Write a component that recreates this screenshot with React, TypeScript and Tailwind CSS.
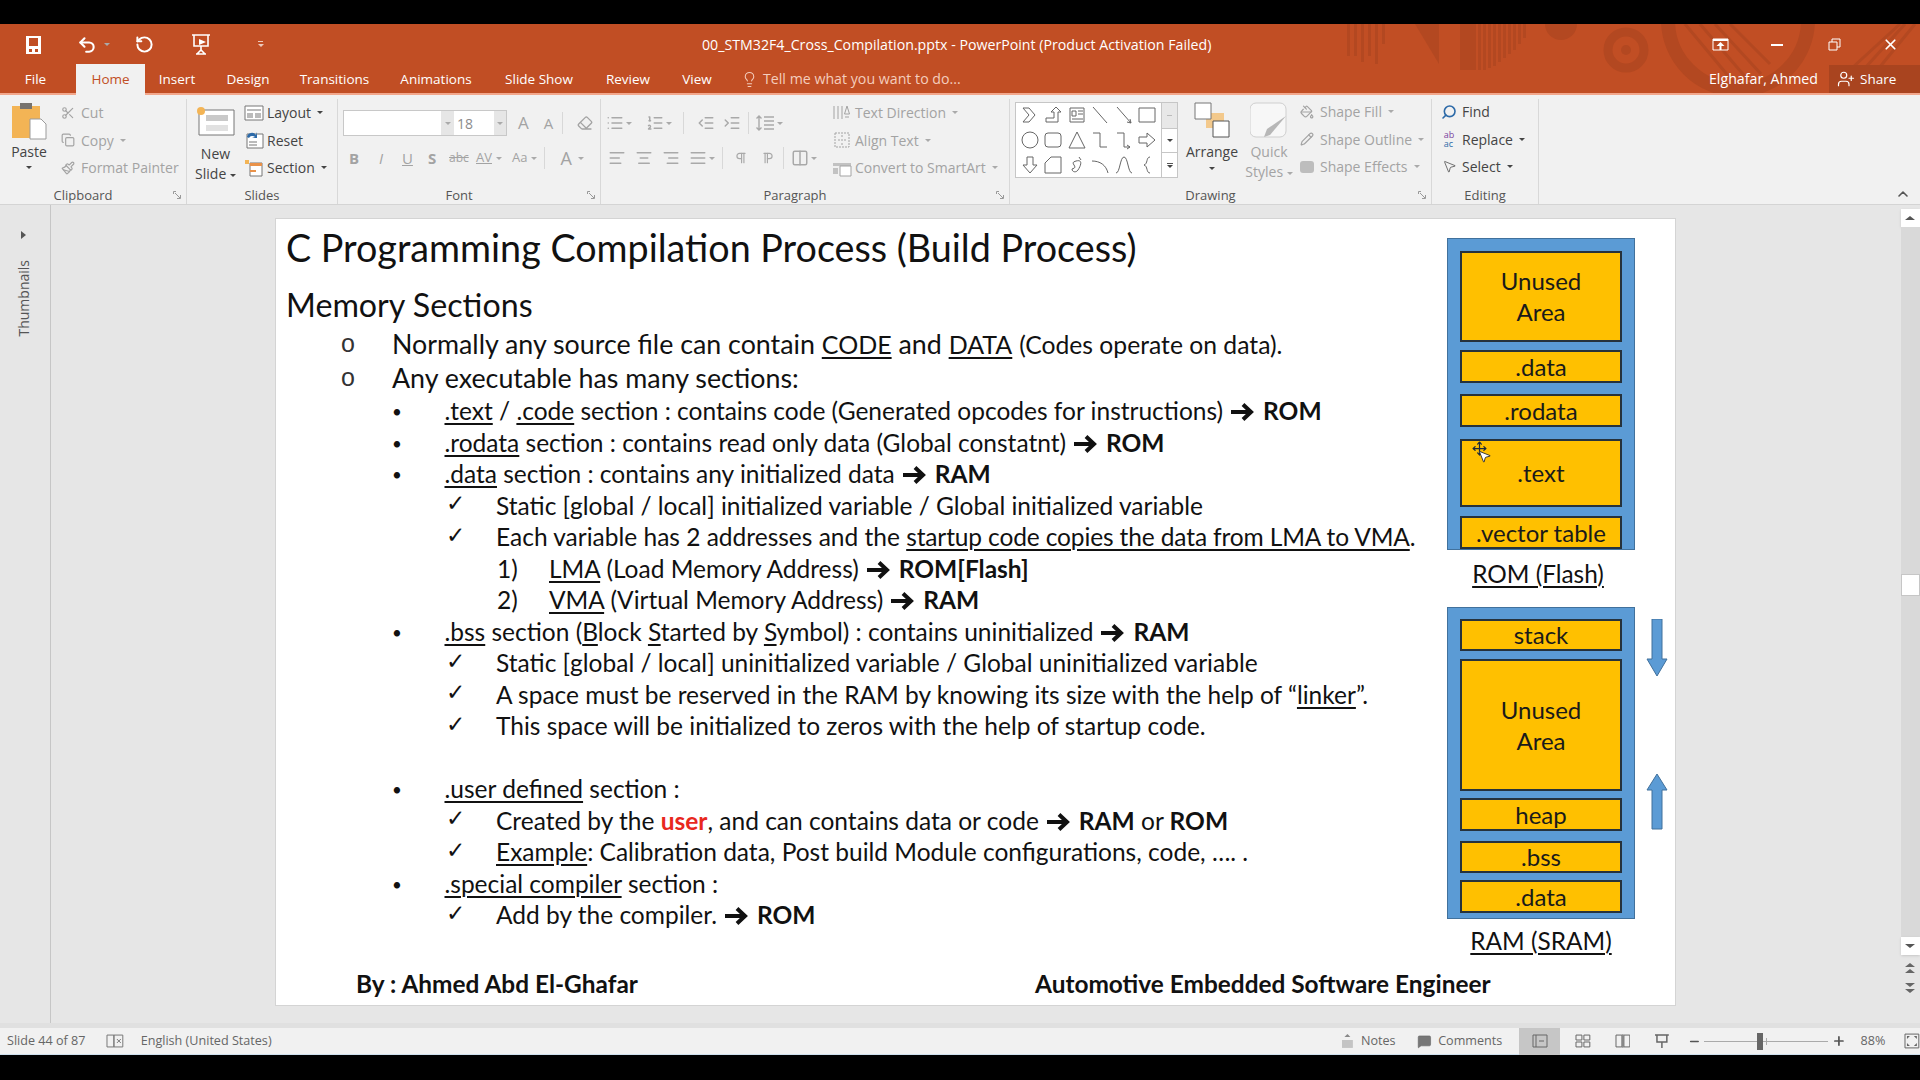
import React from "react";
import {
  Scissors,
  Copy,
  Paintbrush,
  Lightbulb,
  Minus,
  Plus,
  Search,
  MousePointer2,
  Undo2,
  RotateCw,
  X,
  UserPlus,
  AlignLeft,
  AlignCenter,
  AlignRight,
  AlignJustify,
  List,
  ListOrdered,
  IndentDecrease,
  IndentIncrease,
  Eraser,
  Pilcrow,
  Columns2,
  MessageSquare,
  Move,
  PaintBucket,
  Pencil,
  ChevronUp,
} from "lucide-react";

const Caret = ({ dark = false }: { dark?: boolean }) => (
  <span
    className={`inline-block border-x-[3px] border-t-[3px] border-x-transparent align-middle ${
      dark ? "border-t-[#444]" : "border-t-[#aaa]"
    }`}
  />
);

const Launcher = () => (
  <svg width="8" height="8" viewBox="0 0 8 8" className="text-[#999]">
    <path d="M0.5 3V0.5H3M2 2l5 5M7.5 4v3.5H4" fill="none" stroke="currentColor" />
  </svg>
);

interface GroupProps {
  width: string;
  label: string;
  launcher?: boolean;
  children: React.ReactNode;
}

const Group = ({ width, label, launcher, children }: GroupProps) => (
  <div className={`relative flex h-full flex-col border-r border-[#d8d8d8] ${width}`}>
    <div className="min-h-0 flex-1">{children}</div>
    <div
      className={`flex h-[18px] items-center justify-center pt-[1px] text-[13px] text-[#555] ${
        launcher ? "pr-[20px]" : ""
      }`}
    >
      {label}
    </div>
    {launcher && (
      <span className="absolute right-[5px] bottom-[5px] flex">
        <Launcher />
      </span>
    )}
  </div>
);

const SmallAction = ({
  icon,
  label,
  caret,
  active,
}: {
  icon: React.ReactNode;
  label: string;
  caret?: boolean;
  active?: boolean;
}) => (
  <div className={`flex h-[27.5px] items-center gap-[3px] whitespace-nowrap ${active ? "text-[#444]" : "text-[#a3a3a3]"}`}>
    <span className="flex w-[20px] justify-center">{icon}</span>
    <span>{label}</span>
    {caret && (
      <span className="ml-[3px] flex">
        <Caret dark={active} />
      </span>
    )}
  </div>
);

const galleryShapes = [
  "M3 3h6l6 7-6 7H3l6-7z",
  "M9 17H3v-4h8V7H8l5-5 5 5h-3v10z",
  "M3 3h14v14H3zM5 6h4v5H5zM11 6h5M11 9h5M5 14h11",
  "M3 2l14 16",
  "M3 2l14 16M17 18l-4-1M17 18l-1-4",
  "M2 3h16v14H2z",
  "M10 10m-8 0a8 8 0 1 0 16 0a8 8 0 1 0-16 0",
  "M5 3h10a3 3 0 0 1 3 3v8a3 3 0 0 1-3 3H5a3 3 0 0 1-3-3V6a3 3 0 0 1 3-3z",
  "M10 2l8 16H2z",
  "M3 3h7v14h7",
  "M3 3h7v14h6M16 17l-3-2M16 17l-3 2",
  "M2 7h8V3l8 7-8 7v-4H2z",
  "M7 2h6v8h4l-7 8-7-8h4z",
  "M2 18V8l6-6h10v16z",
  "M5 14c8-2-4-6 4-8s4 6 2 9-6 2-6-1M12 2l2 3",
  "M2 6c8 0 14 4 16 12",
  "M2 18c4 0 4-16 8-16s4 16 8 16",
  "M13 2c-4 0-2 7-6 8 4 1 2 8 6 8",
];

const MemBox = ({ h, mt, label, big }: { h: string; mt: string; label: string; big?: boolean }) => (
  <div
    className={`flex w-[162px] items-center justify-center border-2 border-[#26323c] bg-[#ffc000] pb-[1px] text-center text-[24px] leading-[31px] text-[#1a1a1a] ${h} ${mt}`}
  >
    {big ? (
      <span>
        Unused
        <br />
        Area
      </span>
    ) : (
      label
    )}
  </div>
);

const To = () => (
  <svg width="24" height="20" viewBox="0 0 24 20" className="mr-[9px] ml-[7px] inline-block align-[-2px] text-[#111]">
    <path d="M1 10h19M13 2.500l8 7.500-8 7.500" fill="none" stroke="currentColor" strokeWidth="4" />
  </svg>
);

const U = ({ children }: { children: React.ReactNode }) => (
  <span className="underline decoration-[1.5px] underline-offset-[3px]">{children}</span>
);

const levelPad = {
  2: "pl-[116px]",
  3: "pl-[170px]",
  4: "pl-[221px]",
};

const levelMark = {
  2: "w-[52.5px] text-[17px]",
  3: "w-[50px] -translate-y-[3px] font-['DejaVu_Sans',sans-serif] text-[23px] font-bold",
  4: "w-[52px]",
};

const Line = ({ level, mark, children }: { level: 2 | 3 | 4; mark?: string; children?: React.ReactNode }) => (
  <div className={`flex h-[31.5px] items-center whitespace-nowrap text-[24.5px] ${levelPad[level]}`}>
    <span className={`shrink-0 ${levelMark[level]}`}>{mark ?? (level === 2 ? "•" : level === 3 ? "✓" : "")}</span>
    <span>{children}</span>
  </div>
);

const Top = ({ children }: { children: React.ReactNode }) => (
  <div className="flex h-[34px] items-center whitespace-nowrap pl-[65px] text-[26.8px]">
    <span className="w-[51px] shrink-0 font-['Liberation_Sans',sans-serif] text-[25px] text-[#333]">o</span>
    <span>{children}</span>
  </div>
);

export default function App() {
  return (
    <div className="flex h-[1080px] w-[1920px] flex-col overflow-hidden bg-black font-['Open_Sans',sans-serif] text-[13.5px]">
      <div className="h-[24px] shrink-0" />

      {/* title bar and tabs */}
      <div className="relative h-[71px] shrink-0 border-b-2 border-[#f2a78c] bg-[#c14e24] text-white">
        <svg className="absolute top-0 left-[1300px]" width="620" height="69" viewBox="0 0 620 69">
          <g fill="#b34821">
            <path d="M47 0h3v32h-3zM54 0h3v32h-3zM61 0h3v38h-3zM68 0h3v32h-3zM75 0h3v40h-3zM82 0h3v20h-3z" />
            <path d="M115 0h24v40z" />
            <path d="M160 0h16v46h-16zM178 0h3v46h-3zM183 0h3v46h-3zM188 0h3v44h-3zM193 0h3v42h-3zM198 0h3v38h-3zM203 0h3v34h-3zM208 0h3v30h-3zM213 0h3v26h-3zM218 0h3v20h-3zM223 0h3v14h-3z" />
            <path d="M245 0h32a16 16 0 0 1-32 0z" />
          </g>
          <circle cx="326" cy="26" r="18" fill="none" stroke="#b34821" strokeWidth="9" />
          <circle cx="326" cy="26" r="5" fill="#b34821" />
          <circle cx="438" cy="-4" r="70" fill="none" stroke="#b34821" strokeWidth="14" />
          <path d="M385 0l50 60M400 0l48 56M415 0l46 50M430 0l40 40" stroke="#b34821" strokeWidth="3" />
          <path d="M540 55l60-55M555 55l50-55M570 55l45-55" stroke="#b34821" strokeWidth="3" />
        </svg>

        <div className="relative flex h-[41px] items-center">
          <div className="flex h-full w-[702px] shrink-0 items-center">
            <svg width="17" height="20" viewBox="0 0 17 20" className="ml-[25px]">
              <path d="M1 1h15v18H1z" fill="#fff" />
              <path d="M4 3h9v8H4z" fill="#c14e24" />
              <path d="M4 14h3v3H4zM10 14h3v3h-3z" fill="#c14e24" />
            </svg>
            <Undo2 size={20} strokeWidth={2.5} className="ml-[35px]" />
            <span className="ml-[7px] flex">
              <Caret dark={false} />
            </span>
            <RotateCw size={19} strokeWidth={2.5} className="ml-[25px] -scale-x-100" />
            <svg width="22" height="24" viewBox="0 0 22 24" className="ml-[36px]">
              <path d="M2 2h18M4 2v11h14V2M11 13v4M7 21l4-4 4 4M6 21h10" fill="none" stroke="#fff" strokeWidth="1.6" />
              <path d="M9 6l7 3-7 3z" fill="#fff" />
            </svg>
            <span className="ml-[46px] flex h-[7px] w-[5px] flex-col items-center">
              <span className="h-[1px] w-[5px] bg-white/70" />
              <span className="mt-[2px] border-x-[3px] border-t-[3px] border-x-transparent border-t-white/70" />
            </span>
          </div>
          <div className="w-[509px] shrink-0 whitespace-nowrap text-center text-[14.2px]">
            00_STM32F4_Cross_Compilation.pptx - PowerPoint (Product Activation Failed)
          </div>
          <svg width="17" height="13" viewBox="0 0 17 13" className="ml-[501px]">
            <path d="M1 1h15v11H1z" fill="none" stroke="#fff" />
            <path d="M1 1h15v2H1zM8.5 4l4 4h-3v4h-2V8h-3z" fill="#fff" />
          </svg>
          <span className="ml-[42px] h-[2px] w-[12px] bg-white" />
          <svg width="13" height="13" viewBox="0 0 13 13" className="ml-[45px]">
            <path d="M1 4h8v8H1zM4 4V1h8v8H9" fill="none" stroke="#fff" />
          </svg>
          <X size={17} strokeWidth={2.4} className="ml-[41px]" />
        </div>

        <div className="relative flex h-[28px] items-end">
          <div className="flex h-full w-[76px] items-center justify-center pr-[5px]">File</div>
          <div className="-mb-[2px] flex h-[31px] w-[69px] items-center justify-center bg-[#f1f1f1] text-[#c14e24]">Home</div>
          <div className="flex h-full w-[64px] items-center justify-center">Insert</div>
          <div className="flex h-full w-[78px] items-center justify-center">Design</div>
          <div className="flex h-full w-[95px] items-center justify-center">Transitions</div>
          <div className="flex h-full w-[108px] items-center justify-center">Animations</div>
          <div className="flex h-full w-[98px] items-center justify-center">Slide Show</div>
          <div className="flex h-full w-[80px] items-center justify-center">Review</div>
          <div className="flex h-full w-[58px] items-center justify-center">View</div>
          <div className="flex h-full items-center pl-[15px] text-[14.2px] text-[#f4cdbd]">
            <Lightbulb size={17} strokeWidth={1.5} />
            <span className="ml-[5px]">Tell me what you want to do...</span>
          </div>
          <div className="ml-auto flex h-full items-center">
            <span className="mr-[11px] whitespace-nowrap text-[14.2px]">Elghafar, Ahmed</span>
            <div className="flex h-full w-[91px] items-center bg-[#a9441f] pl-[8px]">
              <UserPlus size={18} strokeWidth={1.6} />
              <span className="ml-[5px]">Share</span>
            </div>
          </div>
        </div>
      </div>

      {/* ribbon */}
      <div className="relative flex h-[110px] shrink-0 border-b border-[#d4d4d4] bg-[#f1f1f1] pt-[4px] text-[14px] text-[#444]">
        <Group width="w-[187px]" label="Clipboard" launcher>
          <div className="flex h-full">
            <div className="flex w-[58px] flex-col items-center pt-[3px]">
              <svg width="36" height="38" viewBox="0 0 36 38">
                <path d="M1 4h28v32H1z" fill="#f3b455" />
                <path d="M9 1h12v6H9z" fill="#77736e" />
                <path d="M19 17h11l5 5v15H19z" fill="#fff" stroke="#9b9b9b" />
              </svg>
              <span className="mt-[3px] leading-[18px]">Paste</span>
              <span className="mt-[5px] flex">
                <Caret dark />
              </span>
            </div>
            <div>
              <SmallAction icon={<Scissors size={14} />} label="Cut" />
              <SmallAction icon={<Copy size={14} />} label="Copy" caret />
              <SmallAction icon={<Paintbrush size={14} />} label="Format Painter" />
            </div>
          </div>
        </Group>

        <Group width="w-[151px]" label="Slides">
          <div className="flex h-full">
            <div className="flex w-[57px] flex-col items-center pt-[7px]">
              <svg width="40" height="30" viewBox="0 0 40 30">
                <path d="M3 4h35v25H3z" fill="#fff" stroke="#777" />
                <path d="M10 9h22v6H10z" fill="#c9c9c9" />
                <path d="M10 19h22v6H10z" fill="#e1e1e1" />
                <circle cx="5" cy="5" r="4" fill="#f3b455" />
              </svg>
              <span className="mt-[9px] leading-[18px]">New</span>
              <span className="mt-[2px] whitespace-nowrap leading-[18px]">
                Slide <Caret dark />
              </span>
            </div>
            <div>
              <SmallAction
                active
                caret
                label="Layout"
                icon={
                  <svg width="20" height="16" viewBox="0 0 20 16">
                    <path d="M1 1h18v14H1z" fill="#fff" stroke="#777" />
                    <path d="M3 4h14v2H3zM3 8h6v5H3zM11 8h6v5h-6z" fill="#bbb" />
                  </svg>
                }
              />
              <SmallAction
                active
                label="Reset"
                icon={
                  <svg width="20" height="18" viewBox="0 0 20 18">
                    <path d="M3 3h16v14H3z" fill="#fff" stroke="#777" />
                    <path d="M5 10h8v2H5zM5 13h8v2H5z" fill="#bbb" />
                    <path d="M3 6a5 5 0 0 1 9-2l1-3v6H8l3-1a4 4 0 0 0-6 1z" fill="#2d6aa8" />
                  </svg>
                }
              />
              <SmallAction
                active
                caret
                label="Section"
                icon={
                  <svg width="20" height="18" viewBox="0 0 20 18">
                    <path d="M1 1h4v4H1z" fill="#f3b455" />
                    <path d="M6 4h12v13H6z" fill="#fff" stroke="#777" />
                    <path d="M6 4h12v3H6zM6 11h6v2H6z" fill="#e9924a" />
                  </svg>
                }
              />
            </div>
          </div>
        </Group>

        <Group width="w-[263px]" label="Font" launcher>
          <div className="flex h-full flex-col pl-[5px] pt-[11px] text-[#a3a3a3]">
            <div className="flex h-[26px] items-center">
              <div className="h-[26px] w-[98px] border border-r-0 border-[#c8c8c8] bg-white" />
              <div className="flex h-[26px] w-[13px] items-center justify-center border-y border-[#c8c8c8] bg-[#e6e6e6]">
                <Caret />
              </div>
              <div className="flex h-[26px] w-[40px] items-center border-y border-[#c8c8c8] bg-white pl-[3px] text-[#8b8b8b]">
                18
              </div>
              <div className="flex h-[26px] w-[13px] items-center justify-center border border-l-0 border-[#c8c8c8] bg-[#e6e6e6]">
                <Caret />
              </div>
              <span className="ml-[11px] text-[17px]">A</span>
              <span className="ml-[15px] text-[15px]">A</span>
              <span className="ml-[9px] h-[22px] w-px bg-[#d8d8d8]" />
              <Eraser size={16} className="ml-[14px]" />
            </div>
            <div className="mt-[10px] flex h-[24px] items-center text-[15px]">
              <span className="ml-[6px] w-[20px] font-bold">B</span>
              <span className="ml-[10px] w-[18px] italic">I</span>
              <span className="ml-[5px] w-[20px] underline">U</span>
              <span className="ml-[6px] w-[20px] font-bold">S</span>
              <span className="ml-[1px] w-[23px] text-[12px] line-through">abc</span>
              <span className="ml-[4px] text-[13px] underline">AV</span>
              <span className="ml-[4px] flex">
                <Caret />
              </span>
              <span className="ml-[10px] text-[13px]">Aa</span>
              <span className="ml-[4px] flex">
                <Caret />
              </span>
              <span className="ml-[7px] h-[22px] w-px bg-[#d8d8d8]" />
              <span className="ml-[15px] text-[18px]">A</span>
              <span className="ml-[6px] flex">
                <Caret />
              </span>
            </div>
          </div>
        </Group>

        <Group width="w-[409px]" label="Paragraph" launcher>
          <div className="flex h-full text-[#a9a9a9]">
            <div className="w-[231px] pl-[7px] pt-[11px]">
              <div className="flex h-[26px] items-center">
                <List size={18} className="-ml-[2px]" />
                <span className="ml-[2px] flex">
                  <Caret />
                </span>
                <ListOrdered size={18} className="ml-[14px]" />
                <span className="ml-[2px] flex">
                  <Caret />
                </span>
                <span className="ml-[11px] h-[22px] w-px bg-[#d8d8d8]" />
                <IndentDecrease size={18} className="ml-[13px]" />
                <IndentIncrease size={18} className="ml-[8px]" />
                <span className="ml-[7px] h-[22px] w-px bg-[#d8d8d8]" />
                <svg width="20" height="18" viewBox="0 0 20 18" className="ml-[6px]">
                  <path d="M4 2v14M1.5 4.5L4 2l2.5 2.5M1.5 13.500L4 16l2.500-2.500M9 3h10M9 7h10M9 11h10M9 15h10" fill="none" stroke="currentColor" strokeWidth="1.4" />
                </svg>
                <span className="ml-[2px] flex">
                  <Caret />
                </span>
              </div>
              <div className="mt-[10px] flex h-[24px] items-center">
                <AlignLeft size={18} />
                <AlignCenter size={18} className="ml-[9px]" />
                <AlignRight size={18} className="ml-[9px]" />
                <AlignJustify size={18} className="ml-[9px]" />
                <span className="ml-[2px] flex">
                  <Caret />
                </span>
                <span className="ml-[7px] h-[22px] w-px bg-[#d8d8d8]" />
                <Pilcrow size={14} className="ml-[11px]" />
                <Pilcrow size={14} className="ml-[13px] -scale-x-100" />
                <span className="ml-[8px] h-[22px] w-px bg-[#d8d8d8]" />
                <Columns2 size={18} className="ml-[7px]" />
                <span className="ml-[2px] flex">
                  <Caret />
                </span>
              </div>
            </div>
            <div>
              <SmallAction
                caret
                label="Text Direction"
                icon={
                  <svg width="20" height="20" viewBox="0 0 20 20">
                    <path d="M2 3v13M6 3v13M10 3v13M15 3l-2.500 8h5zM13 14h4" fill="none" stroke="currentColor" />
                  </svg>
                }
              />
              <SmallAction
                caret
                label="Align Text"
                icon={
                  <svg width="20" height="20" viewBox="0 0 20 20">
                    <path d="M3 3h14v14H3zM6 10h8M10 5v3M10 15v-3" fill="none" stroke="currentColor" strokeDasharray="2 1" />
                  </svg>
                }
              />
              <SmallAction
                caret
                label="Convert to SmartArt"
                icon={
                  <svg width="20" height="18" viewBox="0 0 20 18">
                    <path d="M1 4h18v3H1z" fill="#c2c2c2" />
                    <path d="M8 7h11v10H8z" fill="#fff" stroke="currentColor" />
                    <path d="M1 9h5v6H1z" fill="#c2c2c2" />
                  </svg>
                }
              />
            </div>
          </div>
        </Group>

        <Group width="w-[422px]" label="Drawing" launcher>
          <div className="flex h-full pl-[5px] pt-[3px]">
            <div className="flex h-[76px] w-[163px] border border-[#c6c6c6] bg-white">
              <div className="grid flex-1 grid-cols-6 grid-rows-3 place-items-center px-[2px] text-[#666]">
                {galleryShapes.map((d) => (
                  <svg key={d} width="20" height="20" viewBox="0 0 20 20">
                    <path d={d} fill="none" stroke="currentColor" />
                  </svg>
                ))}
              </div>
              <div className="flex w-[16px] flex-col border-l border-[#c6c6c6]">
                <div className="flex h-[25px] items-center justify-center bg-[#e8e8e8]">
                  <span className="h-[1px] w-[5px] bg-[#bbb]" />
                </div>
                <div className="flex h-[25px] items-center justify-center border-y border-[#c6c6c6]">
                  <Caret dark />
                </div>
                <div className="flex h-[24px] flex-col items-center justify-center gap-[1px]">
                  <span className="h-[1px] w-[6px] bg-[#555]" />
                  <Caret dark />
                </div>
              </div>
            </div>
            <div className="flex w-[68px] flex-col items-center">
              <svg width="36" height="36" viewBox="0 0 36 36">
                <path d="M12 11h18v15H12z" fill="#f3c98c" />
                <path d="M1 1h16v16H1z" fill="#fff" stroke="#777" />
                <path d="M19 19h16v16H19z" fill="#fff" stroke="#555" />
              </svg>
              <span className="mt-[5px] leading-[18px]">Arrange</span>
              <span className="mt-[6px] flex">
                <Caret dark />
              </span>
            </div>
            <div className="flex w-[46px] flex-col items-center text-[#a3a3a3]">
              <svg width="38" height="36" viewBox="0 0 38 36">
                <path d="M6 1h24a6 6 0 0 1 6 6v22a6 6 0 0 1-6 6H6a6 6 0 0 1-6-6V7a6 6 0 0 1 6-6z" fill="#f7f7f7" stroke="#cfcfcf" />
                <path d="M36 14L20 33l-6 2 3-8z" fill="#b7b7b7" />
              </svg>
              <span className="mt-[5px] leading-[18px]">Quick</span>
              <span className="mt-[2px] whitespace-nowrap leading-[18px]">
                Styles <Caret />
              </span>
            </div>
            <div className="ml-[5px] -mt-[4px]">
              <SmallAction icon={<PaintBucket size={14} />} label="Shape Fill" caret />
              <SmallAction icon={<Pencil size={14} />} label="Shape Outline" caret />
              <SmallAction icon={<span className="h-[12px] w-[14px] rounded-[3px] bg-[#bdbdbd]" />} label="Shape Effects" caret />
            </div>
          </div>
        </Group>

        <Group width="w-[107px]" label="Editing">
          <div className="-mt-[1px] pl-[7px]">
            <SmallAction active icon={<Search size={16} strokeWidth={2.4} className="-scale-x-100 text-[#2d6aa8]" />} label="Find" />
            <SmallAction
              active
              caret
              label="Replace"
              icon={
                <span className="text-[9px] leading-[9px]">
                  <span className="text-[#7b3fa0]">ab</span>
                  <br />
                  <span className="text-[#2d6aa8]">ac</span>
                </span>
              }
            />
            <SmallAction active caret label="Select" icon={<MousePointer2 size={15} strokeWidth={1.2} />} />
          </div>
        </Group>

        <ChevronUp size={16} strokeWidth={2.4} className="absolute right-[9px] bottom-[2px] text-[#555]" />
      </div>

      {/* workspace */}
      <div className="flex min-h-0 flex-1 border-b-[5px] border-[#e0e0e0] bg-[#e6e6e6]">
        <div className="flex w-[51px] shrink-0 flex-col items-center border-r border-[#c6c6c6] pt-[26px] pr-[4px]">
          <span className="border-y-[4px] border-l-[5px] border-y-transparent border-l-[#555]" />
          <span className="mt-[21px] rotate-180 text-[14px] text-[#555] [writing-mode:vertical-rl]">Thumbnails</span>
        </div>

        <div className="min-w-0 flex-1 pl-[224px] pt-[13px]">
          {/* slide */}
          <div className="flex h-[788px] w-[1401px] flex-col border border-[#d4d4d4] bg-white font-['Lato',sans-serif] text-[#111]">
            <div className="flex h-[745px] shrink-0">
              <div className="w-[1171px] shrink-0">
                <div className="flex h-[58px] items-center whitespace-nowrap pl-[10px] text-[37.7px]">
                  C Programming Compilation Process (Build Process)
                </div>
                <div className="flex h-[50px] items-center whitespace-nowrap pl-[10px] pt-[6px] text-[32.2px]">
                  Memory Sections
                </div>
                <Top>
                  Normally any source file can contain{" "}
                  <span className="text-[25px]">
                    <U>CODE</U>
                  </span>{" "}
                  and{" "}
                  <span className="text-[25px]">
                    <U>DATA</U>
                  </span>{" "}
                  <span className="text-[24.7px]">(Codes operate on data).</span>
                </Top>
                <Top>Any executable has many sections:</Top>
                <div className="mt-[1px]">
                  <Line level={2}>
                    <U>.text</U> / <U>.code</U> section : contains code (Generated opcodes for instructions)
                    <To />
                    <b>ROM</b>
                  </Line>
                  <Line level={2}>
                    <U>.rodata</U> section : contains read only data (Global constatnt)
                    <To />
                    <b>ROM</b>
                  </Line>
                  <Line level={2}>
                    <U>.data</U> section : contains any initialized data
                    <To />
                    <b>RAM</b>
                  </Line>
                  <Line level={3}>Static [global / local] initialized variable / Global initialized variable</Line>
                  <Line level={3}>
                    Each variable has 2 addresses and the{" "}
                    <span className="tracking-[-0.13px]">
                      <U>startup code copies the data from LMA to VMA</U>
                    </span>
                    .
                  </Line>
                  <Line level={4} mark="1)">
                    <U>LMA</U> (Load Memory Address)
                    <To />
                    <b>ROM[Flash]</b>
                  </Line>
                  <Line level={4} mark="2)">
                    <U>VMA</U> (Virtual Memory Address)
                    <To />
                    <b>RAM</b>
                  </Line>
                  <Line level={2}>
                    <U>.bss</U> section (<U>B</U>lock <U>S</U>tarted by <U>S</U>ymbol) : contains uninitialized
                    <To />
                    <b>RAM</b>
                  </Line>
                  <Line level={3}>Static [global / local] uninitialized variable / Global uninitialized variable</Line>
                  <Line level={3}>
                    A space must be reserved in the RAM by knowing its size with the help of “<U>linker</U>”.
                  </Line>
                  <Line level={3}>This space will be initialized to zeros with the help of startup code.</Line>
                  <div className="h-[31.5px]" />
                  <Line level={2}>
                    <U>.user defined</U> section :
                  </Line>
                  <Line level={3}>
                    Created by the <b className="text-[#e8281e]">user</b>, and can contains data or code
                    <To />
                    <b>RAM</b> or <b>ROM</b>
                  </Line>
                  <Line level={3}>
                    <U>Example</U>: Calibration data, Post build Module configurations, code, …. .
                  </Line>
                  <Line level={2}>
                    <U>.special compiler</U> section :
                  </Line>
                  <Line level={3}>
                    Add by the compiler.
                    <To />
                    <b>ROM</b>
                  </Line>
                </div>
              </div>

              <div className="relative flex-1 pt-[19px]">
                <div className="flex h-[312px] w-[188px] flex-col border border-[#41719c] bg-[#5b9bd5] pl-[12px]">
                  <MemBox h="h-[91px]" mt="mt-[12px]" label="" big />
                  <MemBox h="h-[33px]" mt="mt-[8px]" label=".data" />
                  <MemBox h="h-[33px]" mt="mt-[11px]" label=".rodata" />
                  <MemBox h="h-[68px]" mt="mt-[12px]" label=".text" />
                  <MemBox h="h-[33px]" mt="mt-[9px]" label=".vector table" />
                </div>
                <div className="flex h-[48px] w-[182px] items-center justify-center text-[24.4px] underline decoration-[1.5px] underline-offset-[3px]">
                  ROM (Flash)
                </div>
                <div className="mt-[9px] flex">
                  <div className="flex h-[312px] w-[188px] shrink-0 flex-col border border-[#41719c] bg-[#5b9bd5] pl-[12px]">
                    <MemBox h="h-[32px]" mt="mt-[11px]" label="stack" />
                    <MemBox h="h-[132px]" mt="mt-[8px]" label="" big />
                    <MemBox h="h-[33px]" mt="mt-[7px]" label="heap" />
                    <MemBox h="h-[32px]" mt="mt-[10px]" label=".bss" />
                    <MemBox h="h-[33px]" mt="mt-[7px]" label=".data" />
                  </div>
                  <div className="ml-[11px] flex flex-col pt-[12px]">
                    <svg width="22" height="58" viewBox="0 0 22 58">
                      <path d="M6 0h10v40h5L11 57 1 40h5z" fill="#5b9bd5" stroke="#41719c" />
                    </svg>
                    <svg width="22" height="57" viewBox="0 0 22 57" className="mt-[96px]">
                      <path d="M6 56h10V17h5L11 1 1 17h5z" fill="#5b9bd5" stroke="#41719c" />
                    </svg>
                  </div>
                </div>
                <div className="flex h-[44px] w-[188px] items-center justify-center text-[24.4px] underline decoration-[1.5px] underline-offset-[3px]">
                  RAM (SRAM)
                </div>
                <div className="absolute top-[222px] left-[25px] text-[#222]">
                  <Move size={15} strokeWidth={2} className="text-[#1c2a3a]" />
                  <MousePointer2 size={15} fill="#fff" strokeWidth={1.4} className="-mt-[7px] ml-[5px]" />
                </div>
              </div>
            </div>
            <div className="flex h-[41px] items-center whitespace-nowrap pl-[80px] text-[24.4px] font-bold">
              <span className="w-[679px] shrink-0">By : Ahmed Abd El-Ghafar</span>
              <span>Automotive Embedded Software Engineer</span>
            </div>
          </div>
        </div>

        {/* scrollbar */}
        <div className="relative flex w-[20px] shrink-0 flex-col items-center pt-[4px]">
          <div className="flex h-[18px] w-[19px] items-center justify-center bg-white shadow-sm">
            <span className="border-x-[5px] border-b-[4px] border-x-transparent border-b-[#555]" />
          </div>
          <div className="flex h-[710px] w-[19px] flex-col bg-[#d9d9d9] pt-[347px]">
            <div className="h-[22px] w-[19px] border border-[#c6c6c6] bg-white" />
          </div>
          <div className="flex h-[18px] w-[19px] items-center justify-center bg-white shadow-sm">
            <span className="border-x-[5px] border-t-[4px] border-x-transparent border-t-[#555]" />
          </div>
          <div className="mt-[8px] flex flex-col items-center gap-[2px]">
            <span className="border-x-[5px] border-b-[4px] border-x-transparent border-b-[#666]" />
            <span className="border-x-[5px] border-b-[4px] border-x-transparent border-b-[#666]" />
          </div>
          <div className="mt-[10px] flex flex-col items-center gap-[2px]">
            <span className="border-x-[5px] border-t-[4px] border-x-transparent border-t-[#666]" />
            <span className="border-x-[5px] border-t-[4px] border-x-transparent border-t-[#666]" />
          </div>
        </div>
      </div>

      {/* status bar */}
      <div className="flex h-[27px] shrink-0 items-center border-b border-[#cfe0ee] bg-[#f1f1f1] text-[12.6px] text-[#666]">
        <span className="ml-[7px] w-[100px] whitespace-nowrap">Slide 44 of 87</span>
        <svg width="18" height="15" viewBox="0 0 18 15">
          <path d="M1 1h7v12H1zM8 1h9v12H8z" fill="none" stroke="#777" />
          <path d="M11 5l4 4M15 5l-4 4" stroke="#777" />
        </svg>
        <span className="ml-[17px] w-[136px] whitespace-nowrap">English (United States)</span>
        <svg width="13" height="14" viewBox="0 0 13 14" className="ml-[1066px]">
          <path d="M1 6h11v8H1z" fill="#c4c4c4" />
          <path d="M6.5 0l3 3h-6z" fill="#888" />
        </svg>
        <span className="ml-[7px] w-[57px]">Notes</span>
        <MessageSquare size={15} fill="#777" strokeWidth={1} className="mr-[6px]" />
        <span className="w-[82px]">Comments</span>
        <div className="flex h-[27px] w-[41px] items-center justify-center bg-[#c6c6c6]">
          <svg width="16" height="14" viewBox="0 0 16 14">
            <path d="M1 1h14v12H1zM4 1v12M7 7h5" fill="none" stroke="#666" />
          </svg>
        </div>
        <svg width="16" height="14" viewBox="0 0 16 14" className="ml-[15px]">
          <path d="M1 1h6v5H1zM9 1h6v5H9zM1 8h6v5H1zM9 8h6v5H9z" fill="none" stroke="#666" />
        </svg>
        <svg width="16" height="14" viewBox="0 0 16 14" className="ml-[24px]">
          <path d="M1 1h6v12H1zM9 1h6v12H9zM8 0v14" fill="none" stroke="#666" />
        </svg>
        <svg width="16" height="15" viewBox="0 0 16 15" className="ml-[24px]">
          <path d="M1 1h14M3 1v7h10V1M8 8v6" fill="none" stroke="#666" strokeWidth="1.5" />
        </svg>
        <Minus size={13} strokeWidth={3} className="ml-[18px] text-[#555]" />
        <div className="relative ml-[3px] h-[1px] w-[125px] bg-[#aaa]">
          <span className="absolute -top-[8px] left-[53px] h-[17px] w-[6px] bg-[#666]" />
          <span className="absolute -top-[3px] left-[62px] h-[7px] w-px bg-[#aaa]" />
        </div>
        <Plus size={14} strokeWidth={3} className="ml-[4px] text-[#555]" />
        <span className="ml-[15px] w-[30px] whitespace-nowrap">88%</span>
        <svg width="16" height="16" viewBox="0 0 16 16" className="ml-[14px]">
          <path d="M1 1h14v14H1z" fill="none" stroke="#666" />
          <path d="M3 3h3L3 6zM13 3v3l-3-3zM3 13v-3l3 3zM13 13h-3l3-3z" fill="#666" />
        </svg>
      </div>

      <div className="h-[25px] flex-none" />
    </div>
  );
}
